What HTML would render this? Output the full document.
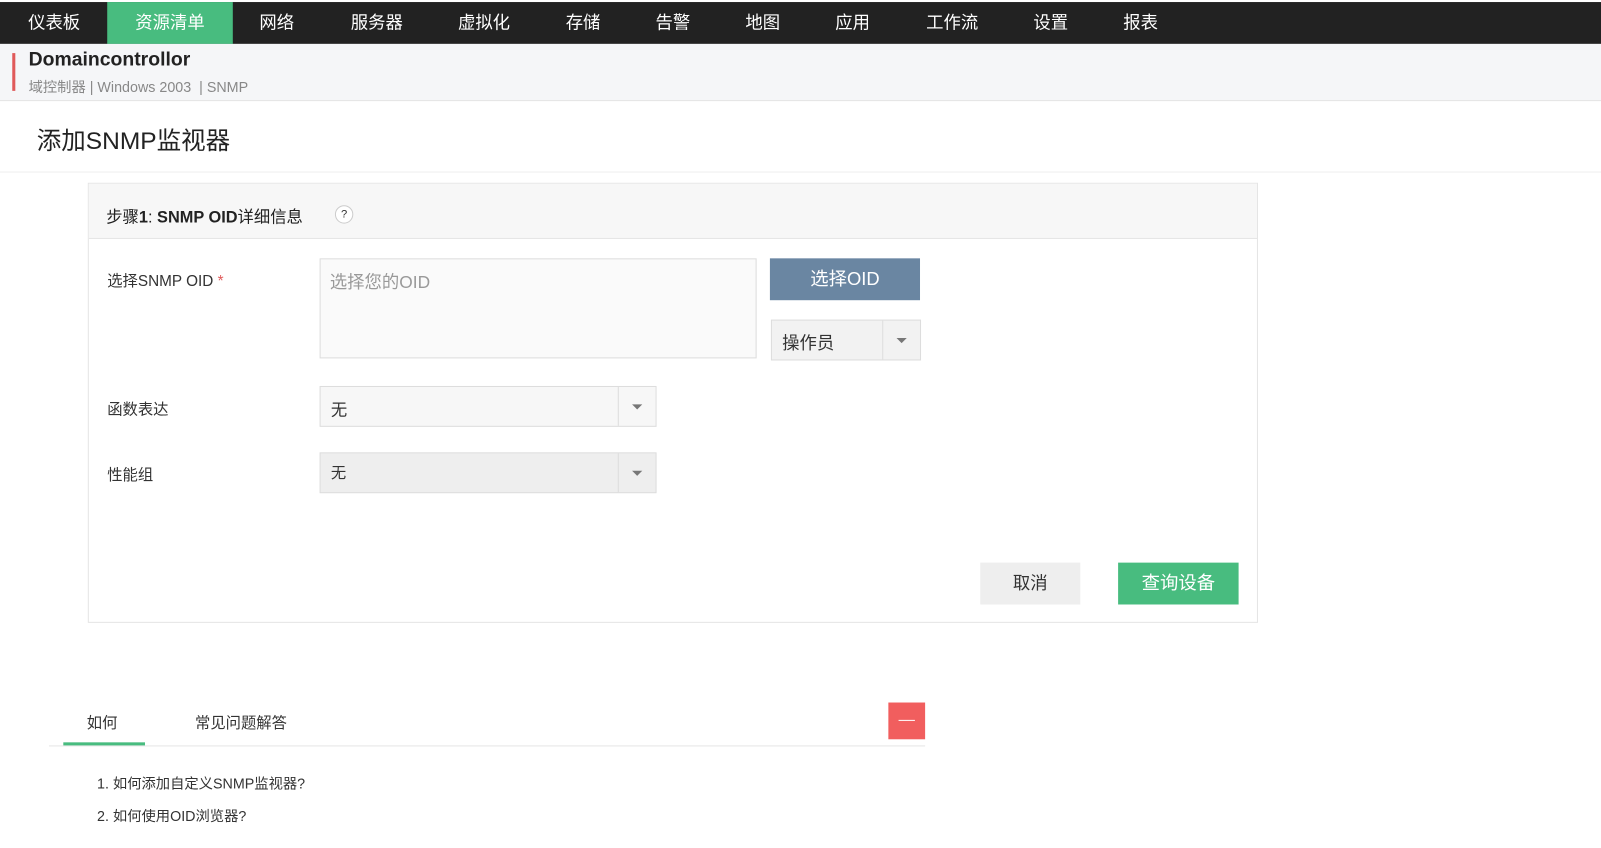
<!DOCTYPE html>
<html><head><meta charset="utf-8"><style>
*{margin:0;padding:0;box-sizing:border-box}
body{width:1601px;height:846px;background:#fff;font-family:"Liberation Sans","Noto Sans CJK SC",sans-serif;color:#333;position:relative;overflow:hidden}
#w{position:absolute;left:0;top:0;width:1568px;height:830px;transform:scale(1.0211);transform-origin:0 0}
.a{position:absolute}
.nav{top:2px;left:0;width:1601px;height:41px;background:#222}
.nav span{position:absolute;top:0;height:41px;line-height:41px;color:#fff;font-size:17px;text-align:center}
.sel{background:#48bc7f}
.dd{border:1px solid #ddd;background:#f7f7f7}
.dd .ar{position:absolute;top:0;right:0;width:37px;height:100%;border-left:1px solid #ddd}
.dd .ar:after{content:"";position:absolute;left:13px;top:50%;margin-top:-2px;border:5px solid transparent;border-top:5px solid #777;border-bottom:0}
</style></head><body><div id="w">
<div class="a nav">
<span style="left:12px;width:82px">仪表板</span>
<span class="sel" style="left:105px;width:123px">资源清单</span>
<span style="left:240px;width:62px">网络</span>
<span style="left:330px;width:78px">服务器</span>
<span style="left:435px;width:78px">虚拟化</span>
<span style="left:540px;width:62px">存储</span>
<span style="left:628px;width:62px">告警</span>
<span style="left:716px;width:62px">地图</span>
<span style="left:804px;width:62px">应用</span>
<span style="left:895px;width:75px">工作流</span>
<span style="left:998px;width:62px">设置</span>
<span style="left:1086px;width:62px">报表</span>
</div>
<div class="a" style="top:43px;left:0;width:1601px;height:56px;background:#f5f6f8;border-bottom:1px solid #e5e5e5"></div>
<div class="a" style="top:52px;left:12px;width:3px;height:37px;background:#e05a5a"></div>
<div class="a" style="top:48px;left:28px;font-size:19px;color:#222;font-weight:bold">Domaincontrollor</div>
<div class="a" style="top:75px;left:28px;font-size:14px;color:#888">域控制器 | Windows 2003 &nbsp;| SNMP</div>
<div class="a" style="top:118px;left:36px;font-size:24px;color:#222">添加SNMP监视器</div>
<div class="a" style="top:168px;left:0;width:1601px;height:1px;background:#eee"></div>
<div class="a" style="top:179px;left:86px;width:1146px;height:431px;border:1px solid #e5e5e5"></div>
<div class="a" style="top:180px;left:87px;width:1144px;height:54px;background:#f7f7f7;border-bottom:1px solid #e5e5e5"></div>
<div class="a" style="top:199px;left:104px;font-size:16px;color:#222">步骤<b>1</b>:&nbsp;<b>SNMP OID</b>详细信息</div>
<div class="a" style="top:201px;left:328px;width:18px;height:18px;border-radius:50%;border:1px solid #ccc;background:#fff;font-size:11px;text-align:center;line-height:16px">?</div>
<div class="a" style="top:264px;left:105px;font-size:15px">选择SNMP OID <span style="color:#e05a5a">*</span></div>
<div class="a" style="top:253px;left:313px;width:428px;height:98px;border:1px solid #ddd;background:#fafafa;padding:8px 9px;font-size:17px;color:#999">选择您的OID</div>
<div class="a" style="top:253px;left:754px;width:147px;height:41px;background:#6a86a2;color:#fff;font-size:18px;text-align:center;line-height:41px">选择OID</div>
<div class="a dd" style="top:313px;left:755px;width:147px;height:40px;background:#f2f2f2"><span style="position:absolute;left:10px;top:8px;font-size:17px">操作员</span><div class="ar"></div></div>
<div class="a" style="top:390px;left:105px;font-size:15px">函数表达</div>
<div class="a dd" style="top:378px;left:313px;width:330px;height:40px"><span style="position:absolute;left:10px;top:9px;font-size:16px">无</span><div class="ar"></div></div>
<div class="a" style="top:454px;left:105px;font-size:15px">性能组</div>
<div class="a dd" style="top:443px;left:313px;width:330px;height:40px;background:#eee"><span style="position:absolute;left:10px;top:8px;font-size:15px">无</span><div class="ar"></div></div>
<div class="a" style="top:551px;left:960px;width:98px;height:41px;background:#eee;font-size:17px;text-align:center;line-height:41px">取消</div>
<div class="a" style="top:551px;left:1095px;width:118px;height:41px;background:#48bc7f;color:#fff;font-size:18px;text-align:center;line-height:41px">查询设备</div>
<div class="a" style="top:697px;left:85px;font-size:15px">如何</div>
<div class="a" style="top:697px;left:191px;font-size:15px">常见问题解答</div>
<div class="a" style="top:730px;left:48px;width:858px;height:1px;background:#e5e5e5"></div>
<div class="a" style="top:727px;left:62px;width:80px;height:3px;background:#48bc7f"></div>
<div class="a" style="top:688px;left:870px;width:36px;height:36px;background:#f15e5e"><div style="position:absolute;left:10px;top:17px;width:16px;height:1px;background:#fff"></div></div>
<div class="a" style="top:757px;left:95px;font-size:14px">1. 如何添加自定义SNMP监视器?</div>
<div class="a" style="top:789px;left:95px;font-size:14px">2. 如何使用OID浏览器?</div>
</div></body></html>
